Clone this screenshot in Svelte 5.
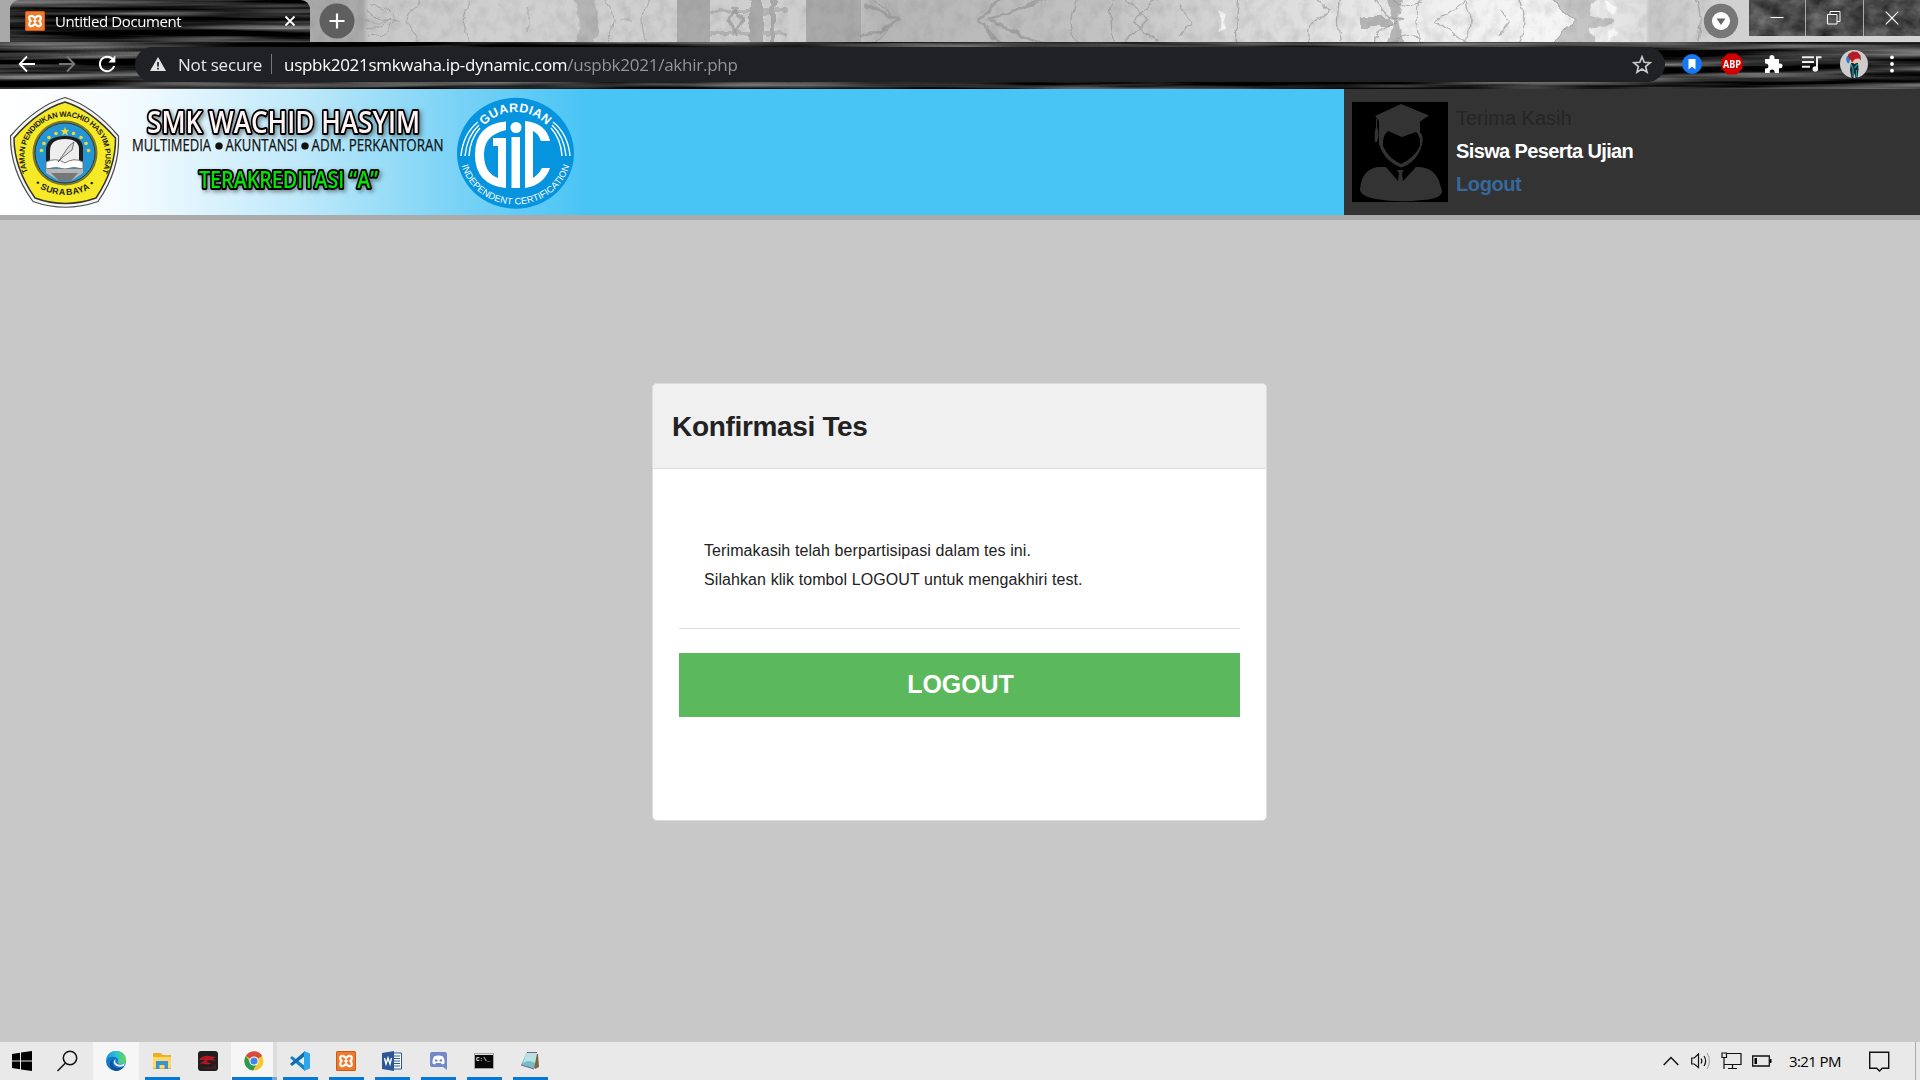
<script>
  const apps = ['edge', 'folder', 'dragon', 'chrome', 'code', 'xampp', 'word', 'discord', 'cmd', 'notepad'];
  const running = ['folder', 'chrome', 'code', 'xampp', 'word', 'discord', 'cmd', 'notepad'];
  const stars = [[41.5, 63.5], [44, 56.5], [49, 50.5], [56, 46.5], [73.5, 46.5], [81, 50.5], [86, 56.5], [88.5, 63.5]];
</script>

{#snippet xampp(size)}
  <svg width={size} height={size} viewBox="0 0 20 20">
    <rect width="20" height="20" rx="1.5" fill="#d0581a" />
    <rect x="1" y="1" width="18" height="18" rx="1" fill="#f07a28" />
    <path d="M6.300 4.800C4 4.800 3.300 8 5.600 10 3.300 12 4 15.200 6.300 15.200 8.600 15.200 8.300 13.300 10 13.300S11.400 15.200 13.700 15.200C16 15.200 16.700 12 14.400 10 16.700 8 16 4.800 13.700 4.800 11.400 4.800 11.700 6.700 10 6.700S8.600 4.800 6.300 4.800Z" fill="#f07a28" stroke="#fff" stroke-width="2.300" />
    <path d="M8.200 10h3.600M10 7v6" fill="none" stroke="#fff" stroke-width="1.500" />
  </svg>
{/snippet}

{#snippet streaks(w, h, seed)}
  <svg class="texture" width={w} height={h} aria-hidden="true">
    <filter id="grain{seed}" x="0" y="0" width="100%" height="100%" color-interpolation-filters="sRGB">
      <feTurbulence type="fractalNoise" baseFrequency="0.004 0.13" numOctaves="3" seed={seed} />
      <feColorMatrix values="1.1 0 0 0 -0.38  1.1 0 0 0 -0.38  1.1 0 0 0 -0.38  0 0 0 0 1" />
    </filter>
    <rect width={w} height={h} filter="url(#grain{seed})" />
  </svg>
{/snippet}

<div class="screen">
  <header class="browser">
    <div class="tabs">
      <svg class="texture" width="1920" height="42" aria-hidden="true">
        <defs>
          <linearGradient id="sky" x1="0" x2="1920" gradientUnits="userSpaceOnUse">
            <stop offset="0" stop-color="#a8a8a8" /><stop offset=".189" stop-color="#aaa" />
            <stop offset=".192" stop-color="#c8c8c8" /><stop offset=".26" stop-color="#d0d0d0" />
            <stop offset=".42" stop-color="#cfcfcf" /><stop offset=".46" stop-color="#b5b5b5" />
            <stop offset=".57" stop-color="#c2c2c2" /><stop offset=".65" stop-color="#d8d8d8" />
            <stop offset=".74" stop-color="#efefef" /><stop offset=".81" stop-color="#f6f6f6" />
            <stop offset=".857" stop-color="#dedede" /><stop offset=".859" stop-color="#c6c6c6" />
            <stop offset=".88" stop-color="#d0d0d0" /><stop offset="1" stop-color="#d4d4d4" />
          </linearGradient>
          <filter id="bark" x="0" y="0" width="100%" height="100%" color-interpolation-filters="sRGB">
            <feTurbulence type="fractalNoise" baseFrequency="0.09 0.07" numOctaves="5" seed="8" />
            <feColorMatrix values="0 0 0 0 .45  0 0 0 0 .45  0 0 0 0 .45  1 0 0 0 -.42" />
          </filter>
          <filter id="gnarl" x="0" y="0" width="1920" height="42" filterUnits="userSpaceOnUse">
            <feTurbulence type="fractalNoise" baseFrequency="0.07" numOctaves="3" seed="5" result="n" />
            <feDisplacementMap in="SourceGraphic" in2="n" scale="9" xChannelSelector="R" yChannelSelector="G" />
            <feGaussianBlur stdDeviation=".5" />
          </filter>
        </defs>
        <rect width="1920" height="42" fill="url(#sky)" />
        <g fill="#a9a9a9">
          <path d="M677 0h33v42h-33ZM806 0h55v42h-55Z" />
          <g filter="url(#gnarl)">
            <path d="M572-4h21q8 25 2 50h-21q10-25-2-50Z" opacity=".7" />
            <path d="M749-4h13v50h-13ZM770-4h5v50h-5Z" />
            <path d="M710 9h76v4h-76ZM710 31h76v4h-76Z" opacity=".7" />
            <path d="M1361 17h30v10h-30ZM1386-4h18l-6 25 6 25h-18l7-25Z" opacity=".8" />
            <path d="M1548-4h50l-8 19 24 5v3l-24 5 8 18h-50l26-25Z" opacity=".6" />
          </g>
        </g>
        <g fill="none" stroke="#909090" stroke-width="1" opacity=".6" filter="url(#gnarl)">
          <path d="M420-2 406 21l14 25M368 5q20 0 28 16-8 16-28 16M366 21h35M366 12l25 9-25 9M470-2l-7 23 7 23M528 8v26M606-4q14 25 0 50M650-4q-16 25 0 50M618 21h14" />
          <path d="m738 5-10 16 10 16M733 5l10 16-10 16M862 3l38 18-38 18M988 21 1050-4M988 21l62 25M980 21l23-25M980 21l23 25" stroke-width="3" />
          <path d="M1115-4q-10 25 0 50M1134 21q12-15 28-25M1134 21q12 15 28 25M1340-4q-5 25 0 50M1374-4q5 20 29 25-24 4-29 25M1392-4q10 16 30 8M1392 46q10-16 30-8M1436 21l35-25M1436 21l35 25M1464-4q12 25 0 50M1421-4q-6 25 0 50M1500 8l10 13-10 13M1518-4q10 25 0 50M1548-4l26 25-26 25M1696-4q8 25 0 50M1120-4l30 25-30 25M1080-4q-18 25 0 50M870-4l22 20M870 46l22-20M1180 5l10 16-10 16M1238-4q-4 25 0 50M1310-4q30 15 10 22t-10 28" stroke-width="1.300" />
        </g>
        <path d="M1218 12l8 3-2 6 2 7-8 3q5-9 0-19M1605 2l13 5-4 7-7-3ZM1605 40l13-5-4-7-7 3Z" fill="#fff" opacity=".7" filter="url(#gnarl)" />
        <rect x="310" width="1410" height="42" filter="url(#bark)" opacity=".4" />
      </svg>
      <div class="tab">
        {@render streaks(300, 42, 4)}
        {@render xampp(20)}
        <span class="title">Untitled Document</span>
        <svg class="close" width="12" height="12" viewBox="0 0 12 12"><path d="m1.500 1.500 9 9m0-9-9 9" stroke="#fff" stroke-width="1.800" /></svg>
      </div>
      <svg class="plus" width="36" height="36" viewBox="0 0 36 36"><circle cx="18" cy="18" r="17.500" fill="#5f5f5f" /><path d="M18 10.500v15M10.500 18h15" stroke="#fff" stroke-width="2.200" /></svg>
      <svg class="search-tabs" width="36" height="36" viewBox="0 0 36 36"><circle cx="18" cy="18" r="17.200" fill="#777" /><circle cx="18" cy="18" r="9" fill="#fff" /><path d="M13.500 15.500h9L18 22Z" fill="#666" /></svg>
      <div class="controls">
        <svg class="texture" width="171" height="36" aria-hidden="true">
          <filter id="rough" x="0" y="0" width="100%" height="100%" color-interpolation-filters="sRGB">
            <feTurbulence type="fractalNoise" baseFrequency=".05 .07" numOctaves="5" seed="3" />
            <feColorMatrix values=".45 0 0 0 .06  .45 0 0 0 .06  .45 0 0 0 .06  0 0 0 0 1" />
          </filter>
          <rect width="171" height="36" filter="url(#rough)" />
        </svg>
        <div class="ctl min"><svg width="14" height="14"><path d="M.5 6.500h13" stroke="#fff" /></svg></div>
        <div class="ctl max"><svg width="14" height="14"><path d="M.5 3.500h9.500v9.500H.5ZM3 3.500v-3h10v10h-3" fill="none" stroke="#fff" /></svg></div>
        <div class="ctl"><svg width="14" height="14"><path d="m.7.7 12.600 12.600m0-12.600L.7 13.300" stroke="#fff" stroke-width="1.200" /></svg></div>
      </div>
    </div>
    <div class="toolbar">
      {@render streaks(1920, 47, 11)}
      <div class="nav">
        <svg width="18" height="18" viewBox="0 0 18 18"><path d="M17 9H2M9 1.500 1.700 9 9 16.500" fill="none" stroke="#fff" stroke-width="1.900" /></svg>
        <svg width="18" height="18" viewBox="0 0 18 18"><path d="M1 9h15M9 1.500 16.300 9 9 16.500" fill="none" stroke="#777" stroke-width="1.900" /></svg>
        <svg width="18" height="18" viewBox="0 0 18 18"><path d="M15 4.500A7.300 7.300 0 1 0 16.200 11" fill="none" stroke="#fff" stroke-width="2" /><path d="M17.300.5v7h-7Z" fill="#fff" /></svg>
      </div>
      <div class="omnibox">
        <svg width="16" height="14" viewBox="0 0 16 14"><path d="M8 0 16 14H0Z" fill="#e4e4e4" /><path d="M8 5v4.500M8 10.700v1.800" stroke="#202124" stroke-width="1.700" /></svg>
        <span class="secure">Not secure</span>
        <i class="bar"></i>
        <span class="url">uspbk2021smkwaha.ip-dynamic.com</span><span class="path">/uspbk2021/akhir.php</span>
        <svg class="star" width="20" height="19" viewBox="0 0 20 19"><path d="m10 1.800 2.200 5.500 5.900.4-4.500 3.800 1.400 5.700-5-3.100-5 3.100 1.400-5.700L1.900 7.700l5.900-.4Z" fill="none" stroke="#c9c9c9" stroke-width="1.700" /></svg>
      </div>
      <div class="extensions">
        <svg width="20" height="20" viewBox="0 0 20 20"><circle cx="10" cy="10" r="10" fill="#1877f2" /><path d="M6.500 5h7v10.500L10 12.500l-3.500 3Z" fill="#fff" /></svg>
        <svg width="22" height="22" viewBox="0 0 22 22"><path d="M6.500.5h9l6 6v9l-6 6h-9l-6-6v-9Z" fill="#d00000" /><text x="2" y="15" textLength="18" lengthAdjust="spacingAndGlyphs" class="abp">ABP</text></svg>
        <svg width="20" height="20" viewBox="0 0 20 20"><path d="M2 5h4.500V3.500a2.500 2.500 0 0 1 5 0V5H16v4.500h1.200a2.400 2.400 0 0 1 0 4.800H16V19h-4.300v-1a2.500 2.500 0 0 0-5 0v1H2v-4.600h1a2.500 2.500 0 0 0 0-5H2Z" fill="#fff" /></svg>
        <svg width="20" height="18" viewBox="0 0 20 18"><path d="M0 2.300h12M0 7h12M0 11.800h8M15 14V2.200h4.500" fill="none" stroke="#eee" stroke-width="2" /><circle cx="13.300" cy="14" r="2.800" fill="#eee" /></svg>
        <svg class="avatar" width="28" height="28" viewBox="0 0 28 28"><circle cx="14" cy="14" r="14" fill="#ccc" /><path d="M11 13h7l.5 6-1 9h-2l-1-5-1 5h-2l-1.500-8Z" fill="#20232d" /><path d="m11 14 2 5v8M17.500 14l-3 4M16.500 20v7" stroke="#07a2a2" stroke-width="1.300" fill="none" /><path d="M10.500 7h8v5l-4 2-4-3Z" fill="#edc3b0" /><path d="m7 8 1.500-4 4-2.500 5 .5 3 3.500.5 5-2-2-4 .5-3 3.500-1.500-3-2 1Z" fill="#b51b25" /><path d="M7 6q-2 4 1 7.500l1.500-1V8Z" fill="#237fcb" /></svg>
        <svg width="6" height="18" viewBox="0 0 6 18"><g fill="#fff"><circle cx="3" cy="2.300" r="1.900" /><circle cx="3" cy="9" r="1.900" /><circle cx="3" cy="15.700" r="1.900" /></g></svg>
      </div>
    </div>
  </header>

  <main>
    <section class="banner">
      <svg class="logos" width="600" height="126" viewBox="0 0 600 126">
        <defs>
          <path id="ringTop" d="M30.500 88A40.500 39.500 0 1 1 99.500 88" />
          <path id="ringLow" d="M24 75Q33 106 65 106T106 75" />
          <path id="gicTop" d="M473 64.500A42.500 41.500 0 0 1 558 64.500" />
          <path id="gicLow" d="M460 64A55.500 51.500 0 0 0 571 64" />
        </defs>
        <path d="M65 8.500Q93 17 118.500 47 120 81 98 112.500 65 124 33 112.500 10 81 10.500 47 36 17 65 8.500Z" fill="#f5f5f5" stroke="#4a4a4a" stroke-width="1.200" />
        <path d="M65 13Q91 21 115.500 49 116 79 96 109 65 120 35 109 14 79 14 49 38 21 65 13Z" fill="#f6e925" stroke="#333" stroke-width="1.500" />
        <circle cx="65" cy="64" r="32.500" fill="#7a7728" /><circle cx="65" cy="64" r="30" fill="#2795d3" stroke="#263b4a" stroke-width="1" />
        <text class="ring"><textPath href="#ringTop" startOffset="50%">TAMAN PENDIDIKAN WACHID HASYIM PUSAT</textPath></text>
        <text class="ring low"><textPath href="#ringLow" startOffset="50%">• SURABAYA •</textPath></text>
        <path d="M46 73V61q0-14 19-14t18 14v12Z" fill="#1c1c1c" /><path d="M50 74V62q0-12 15-12t14 12v12Z" fill="#eee" />
        <path d="M46 73q10-5 19 1 9-6 18-1v7q-9-3-18 0-9-3-19 0Z" fill="#fff" stroke="#777" />
        <path d="M46 80h37v4l-12 8H59l-13-8Z" fill="#b6b6b6" /><path d="M51 84h27l-7 8H59Z" fill="#777" />
        <path d="m58 73 11-16 5-4-2 8-9 7Z" fill="#ddd" stroke="#555" stroke-width=".8" />
        <g fill="#e9dd35">
          {#each stars as [x, y]}<circle cx={x} cy={y - 2} r="1.800" />{/each}
          <path d="m65 38 1.200 3 3.200.2-2.500 2 1 3.200-2.900-1.900-2.900 1.900 1-3.200-2.500-2 3.200-.2Z" />
        </g>
        <g class="shade">
          <text x="147" y="44" class="school outline" textLength="273" lengthAdjust="spacingAndGlyphs">SMK WACHID HASYIM</text>
          <text x="199" y="98.500" class="grade outline" textLength="179" lengthAdjust="spacingAndGlyphs">TERAKREDITASI “A”</text>
        </g>
        <g class="majors">
          <text x="132" y="62.300" textLength="79" lengthAdjust="spacingAndGlyphs">MULTIMEDIA</text>
          <circle cx="219" cy="57" r="3.600" />
          <text x="225.500" y="62.300" textLength="72" lengthAdjust="spacingAndGlyphs">AKUNTANSI</text>
          <circle cx="305" cy="57" r="3.600" />
          <text x="311.500" y="62.300" textLength="132" lengthAdjust="spacingAndGlyphs">ADM. PERKANTORAN</text>
        </g>
        <ellipse cx="515.500" cy="64.300" rx="58.500" ry="55.500" fill="#0794df" />
        <text class="gic top"><textPath href="#gicTop" startOffset="50%">GUARDIAN</textPath></text>
        <text class="gic low"><textPath href="#gicLow" startOffset="50%">INDEPENDENT CERTIFICATION</textPath></text>
        <path d="M461 67q2-22 17-34M465 67q2-20 14-31M469 67q1-17 11-28M570 67q-2-22-17-34M566 67q-2-20-14-31M562 67q-1-17-11-28" fill="none" stroke="#fff" stroke-width="1.400" />
        <path d="M506 32.500Q475 35 475 65.500T506 99V49h-13v8h5v32Q484 84 484 65T506 41Z" fill="#fff" />
        <circle cx="516" cy="38.500" r="5.500" fill="#fff" />
        <path d="M511.500 48h8.500v51h-8.500ZM525 32q21 2 25 20h-9q-3-8-8-10v47q6-4 9-10h8q-6 17-25 20Z" fill="#fff" />
      </svg>
      <aside class="profile">
        <svg width="96" height="100" viewBox="0 0 96 100">
          <rect width="96" height="100" fill="#000" />
          <g fill="#333">
            <path fill-rule="evenodd" d="m49 2 28 11.500-9 6v11q4 3 2 12-5 18-21 23Q32 59 27 42V19l-4-5ZM36 29q-6 5-5 15 5 12 18 18 13-6 19-18 1-10-4-14l-14 5Z" />
            <path d="M24 17h1v8q3 8 0 15h-2q-1-9 1-15Z" />
            <path d="M8 87q2-20 18-22h8l12 14 1-8-2-3h7l-2 3 1 8 13-14q17-1 23 14l3 10q0 8-20 9-23 3-46-1-16-3-16-10Z" />
          </g>
        </svg>
        <div class="who"><span class="thanks">Terima Kasih</span><b>Siswa Peserta Ujian</b><b class="link">Logout</b></div>
      </aside>
    </section>

    <section class="card">
      <h1>Konfirmasi Tes</h1>
      <div class="body">
        <p>Terimakasih telah berpartisipasi dalam tes ini.<br />Silahkan klik tombol LOGOUT untuk mengakhiri test.</p>
        <button>LOGOUT</button>
      </div>
    </section>
  </main>

  <footer>
    <div class="start"><svg width="20" height="20" viewBox="0 0 20 20"><path d="m0 3 8-1.200v7.700H0ZM9 1.600 20 0v9.500H9ZM0 10.500h8v7.800L0 17ZM9 10.500h11V20L9 18.400Z" /></svg></div>
    <div class="find"><svg width="22" height="22" viewBox="0 0 22 22" fill="none" stroke="#111" stroke-width="1.500"><circle cx="14" cy="8" r="6.700" /><path d="m9.500 13-8 8" /></svg></div>
    {#each apps as app}
      <div class="app {app}" class:running={running.includes(app)}>
        {#if app === 'edge'}
          <svg width="20" height="20" viewBox="0 0 20 20"><defs><linearGradient id="eg" x1="0" x2="1"><stop stop-color="#2195dc" /><stop offset=".5" stop-color="#2bc3d2" /><stop offset="1" stop-color="#68d94e" /></linearGradient></defs><circle cx="10" cy="10" r="10" fill="#1178ca" /><path d="M.3 8Q2 0 10 0q9 0 10 8 .2 5-5.500 5-4 0-2.500-3 .5-3-3-4Q4 5 .3 8Z" fill="url(#eg)" /><path d="M7 9q-2 7 5 8 4 .5 6.500-2Q15 20 9.500 20 3 18 4 12q.5-3 4-4Z" fill="#114f9c" /><path d="M10 8q-2 3 1 5 4 2 8-1l-1 3q-6 2-9-1-3-4 1-6" fill="#eee" /></svg>
        {:else if app === 'folder'}
          <svg width="18" height="16" viewBox="0 0 18 16"><path d="M0 0h8l1.500 2H18v14H0Z" fill="#eab026" /><path d="M0 4h18v11H0Z" fill="#ffd868" /><path d="M3 8h12v8h-3.500v-4h-5v4H3Z" fill="#3993d2" /></svg>
        {:else if app === 'dragon'}
          <svg width="20" height="20" viewBox="0 0 20 20"><rect width="20" height="20" rx="3" fill="#211e20" /><path d="M1 9q4-5 10-4l7 1-3 1.500 3 2.500-6-1-4 1 5 2.500-3 1-6-1-3 1Q4 11 7 9Z" fill="#b51620" /><path d="m2 17 12-1 4-3v5H5Z" fill="#5c1920" opacity=".7" /></svg>
        {:else if app === 'chrome'}
          <svg width="20" height="20" viewBox="0 0 20 20"><circle cx="10" cy="10" r="9.500" fill="#f5c931" /><path d="M10 10 1.800 5A9.500 9.500 0 0 1 18.200 5Z" fill="#d94a3d" /><path d="M1.800 5A9.500 9.500 0 0 0 9 19.500L13 12 10 10 6 11Z" fill="#2a9b54" /><circle cx="10" cy="10" r="4.600" fill="#fff" /><circle cx="10" cy="10" r="3.600" fill="#4285ec" /></svg>
        {:else if app === 'code'}
          <svg width="20" height="20" viewBox="0 0 20 20"><path d="M0 7l2-2 13 10v5Z" fill="#1683c7" /><path d="m0 13 15-13v5L2 15Z" fill="#0e6cad" /><path d="m14 0 6 2.500v15L14 20Z" fill="#2ca7ec" /></svg>
        {:else if app === 'xampp'}
          {@render xampp(20)}
        {:else if app === 'word'}
          <svg width="20" height="20" viewBox="0 0 20 20"><path d="M10 2h9.500v16H10Z" fill="#fff" stroke="#2b5797" /><path d="M12 5h6m-6 2.500h6M12 10h6m-6 2.500h6M12 15h6" stroke="#2b5797" /><path d="m0 2 12-2v20L0 18Z" fill="#2b5797" /><path d="m2.500 7 1.500 6 2-6 2 6 1.500-6" fill="none" stroke="#fff" stroke-width="1.400" /></svg>
        {:else if app === 'discord'}
          <svg width="17" height="18" viewBox="0 0 17 18"><path d="M2 0h13q2 0 2 2v16l-4-3H2q-2 0-2-2V2q0-2 2-2Z" fill="#7289c9" /><path d="M4 4.500q4.500-2 9 0 2 3 1.500 7L12 12.500l-1-1.500H6l-1 1.500-2.500-1Q2 8 4 4.500Z" fill="#fff" /><circle cx="6.200" cy="8.500" r="1.300" fill="#7289c9" /><circle cx="10.800" cy="8.500" r="1.300" fill="#7289c9" /></svg>
        {:else if app === 'cmd'}
          <svg width="20" height="16" viewBox="0 0 20 16"><path d="M.5.5h19v15H.5Z" fill="#080808" stroke="#a7a7a7" /><path d="M1 1.500h18" stroke="#ddd" /><text x="2" y="8" class="prompt">C:\_</text></svg>
        {:else}
          <svg width="20" height="20" viewBox="0 0 20 20"><path d="m6 2 12 1 1 13-4 2Z" fill="#80643a" /><path d="m7 1 10 1-3 16L1 14Z" fill="#75bdc7" /><path d="m7 1 10 1-2 10q-6-4-12 0Z" fill="#b8e2e6" /><path d="M7 1.500h10M1 14l13 4" stroke="#647" stroke-width=".8" /></svg>
        {/if}
      </div>
    {/each}
    <div class="tray">
      <svg width="16" height="10"><path d="m.7 9 7.300-7.500L15.300 9" fill="none" stroke="#111" stroke-width="1.500" /></svg>
      <svg width="20" height="18" viewBox="0 0 20 18" fill="none" stroke="#111" stroke-width="1.200"><path d="M.7 6h2.500L7.500 2v13.500L3.200 12H.7ZM10 6.500q1.700 2.300 0 5M13 4q3.300 5 0 10" /><path d="M16 1q5 8 0 16" stroke="#aaa" /></svg>
      <svg width="21" height="18" viewBox="0 0 21 18" fill="none" stroke="#111" stroke-width="1.200"><path d="M6 1.500h14v11H3V6M11.500 13v3M7 16.500h9M1 1h4.500v4.500H1ZM3 6v11" /></svg>
      <svg width="20" height="12" viewBox="0 0 20 12"><path d="M.7 1h16.600v10H.7Z" fill="none" stroke="#111" stroke-width="1.300" /><path d="M2.500 3H5v6H2.500ZM18 4h1.500v4H18Z" /></svg>
      <span class="clock">3:21 PM</span>
      <svg class="note" width="21" height="21" viewBox="0 0 21 21"><path d="M.7 1.200h19v16h-6.500L10.500 20l-2.700-2.800H.7Z" fill="none" stroke="#111" stroke-width="1.400" /></svg>
      <i class="peek"></i>
    </div>
  </footer>
</div>

<style>
  :global(body) { margin: 0; overflow: hidden; }
  .screen { width: 1920px; height: 1080px; display: flex; flex-direction: column; font-family: "Liberation Sans", Arial, sans-serif; background: #c8c8c8; overflow: hidden; }
  svg { display: block; flex: none; }
  span { white-space: nowrap; }
  .texture { position: absolute; left: 0; top: 0; z-index: 0; }
  .browser { height: 89px; font-family: "Open Sans", sans-serif; background: #000; }
  .tabs { height: 42px; position: relative; display: flex; }
  .tabs > *:not(.texture), .tab > :global(*:not(.texture)), .ctl { position: relative; }
  .tab { margin-left: 10px; width: 300px; height: 42px; box-sizing: border-box; border-radius: 9px 9px 0 0; overflow: hidden; display: flex; align-items: center; padding: 0 14px 0 15px; }
  .title { margin-left: 10px; color: #fff; font-size: 15px; letter-spacing: -.4px; flex: 1; }
  .plus { margin: 3px 0 0 9px; }
  .search-tabs { margin: 3px 10px 0 auto; }
  .controls { width: 171px; height: 36px; display: flex; }
  .ctl { flex: 1; display: flex; align-items: center; justify-content: center; }
  .min, .max { border-right: 1px solid #aaa; }
  .toolbar { position: relative; height: 47px; display: flex; align-items: center; box-sizing: border-box; padding-bottom: 2px; border-bottom: 1px solid #000; }
  .nav, .omnibox, .extensions { position: relative; display: flex; align-items: center; }
  .nav { width: 135px; padding-left: 18px; gap: 22px; box-sizing: border-box; }
  .omnibox { width: 1530px; height: 35px; border-radius: 18px; background: #202124; box-sizing: border-box; padding: 0 13px 0 15px; font-size: 17px; color: #fff; }
  .secure { margin-left: 12px; width: 93px; color: #e8e8e8; letter-spacing: -.2px; }
  .bar { width: 1px; height: 20px; background: #777; margin-right: 12px; }
  .url { letter-spacing: -.3px; }
  .path { color: #91959a; letter-spacing: -.25px; }
  .star { margin-left: auto; }
  .extensions { width: 213px; margin-left: 17px; justify-content: space-between; }
  .avatar { margin: 0 2px 0 -2px; }
  .abp { font: bold 10px "Open Sans", sans-serif; fill: #fff; }

  main { height: 953px; display: flex; flex-direction: column; }
  .banner { width: 1920px; height: 126px; flex: none; border-bottom: 5px solid #aaa; display: flex; justify-content: space-between; background: linear-gradient(90deg, #fff 0, #f4fbff 130px, #bfe9fa 300px, #78d2f6 460px, #48c4f5 590px); }
  .profile { width: 576px; box-sizing: border-box; background: #333; display: flex; padding: 13px 8px; }
  .who { margin-left: 8px; display: flex; flex-direction: column; font-size: 20px; line-height: 33px; color: #fff; }
  .who span, .who b { height: 33px; }
  .thanks { color: #252525; }
  .who b { letter-spacing: -.62px; }
  .who .link { color: #36699c; letter-spacing: -.4px; }
  .ring { font: bold 7.700px "Liberation Sans", sans-serif; fill: #222; text-anchor: middle; letter-spacing: -.35px; }
  .ring.low { font-size: 8.800px; letter-spacing: .6px; }
  .school, .grade, .majors text { font-family: "Open Sans", "Noto Sans", sans-serif; }
  .school { font-size: 31px; font-weight: 600; fill: #fff3f3; }
  .grade { font-size: 23px; font-weight: 600; fill: #00e600; }
  .outline { stroke: #000; stroke-width: 4px; paint-order: stroke; stroke-linejoin: round; }
  .shade { filter: drop-shadow(2px 2px 2px #3338); }
  .majors { font-size: 15.500px; fill: #111; stroke: #111; stroke-width: .25px; }
  .gic { fill: #fff; font-family: "Liberation Sans", sans-serif; font-weight: bold; text-anchor: middle; }
  .gic.top { font-size: 12.500px; letter-spacing: .4px; }
  .gic.low { font-size: 9.300px; font-weight: normal; letter-spacing: .1px; }

  .card { margin: 163px 0 0 652px; width: 615px; height: 438px; box-sizing: border-box; border: 1px solid #ddd; border-radius: 5px; background: #fff; overflow: hidden; color: #222; }
  h1 { margin: 0; box-sizing: border-box; height: 85px; padding: 0 19px; background: #f0f0f0; border-bottom: 1px solid #ddd; font-size: 28px; line-height: 85px; letter-spacing: -.33px; }
  .body { padding: 67px 26px 0; }
  p { margin: 0; padding: 0 25px 28px; height: 93px; box-sizing: border-box; border-bottom: 1px solid #ddd; font-size: 16px; line-height: 29px; letter-spacing: .09px; }
  button { display: block; width: 100%; height: 64px; margin-top: 24px; border: 0; padding: 0 0 2px 2px; background: #5cb85c; color: #fff; font: bold 25px "Liberation Sans", Arial, sans-serif; letter-spacing: -.1px; }

  footer { height: 38px; display: flex; background: #e9e9e9; }
  footer > div { display: flex; align-items: center; justify-content: center; }
  .start { width: 44px; }
  .find { width: 49px; padding-right: 3px; box-sizing: border-box; }
  .app { width: 46px; position: relative; }
  .edge, .chrome { background: #f6f6f6; }
  .running::after { content: ""; position: absolute; left: 6px; right: 5px; bottom: 0; height: 3px; background: #0878d7; }
  .chrome { border-right: 4px solid #ddd; box-sizing: border-box; padding-left: 4px; }
  .chrome::after { left: 1px; right: -4px; background: linear-gradient(90deg, #0878d7 40px, #6ba9dc 40px); }
  .prompt { font: bold 6px "Liberation Mono", monospace; fill: #fff; }
  footer .tray { margin-left: auto; width: 257px; justify-content: flex-start; }
  .tray svg:nth-child(2) { margin-left: 12px; }
  .tray svg:nth-child(3) { margin-left: 10px; }
  .tray svg:nth-child(4) { margin-left: 10px; }
  .clock { margin-left: 17px; width: 80px; font: 15px "Open Sans", sans-serif; letter-spacing: -.6px; }
  .peek { width: 1px; height: 38px; background: #aaa; margin-left: 25px; }
</style>
